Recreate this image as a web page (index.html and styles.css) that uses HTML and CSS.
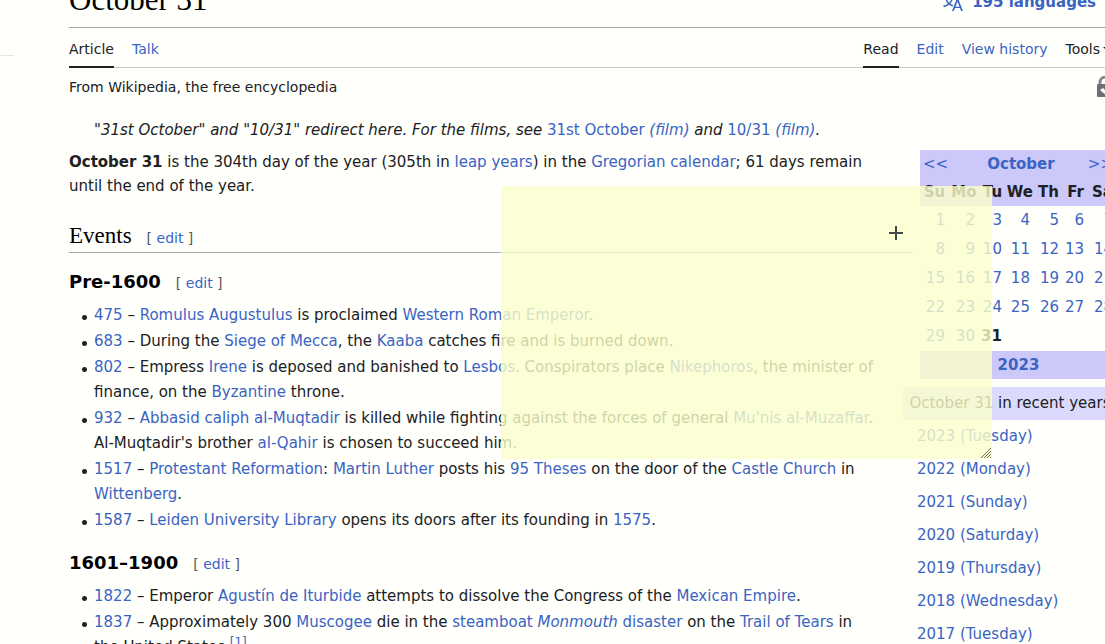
FILE: index.html
```html
<!DOCTYPE html>
<html lang="en">
<head>
<meta charset="utf-8">
<title>October 31 - Wikipedia</title>
<link rel="stylesheet" href="styles.css">
</head>
<body>
<div class="layout">
  <div class="sidebar"></div>
  <div class="page">
    <header class="title-bar">
      <h1 class="title">October 31</h1>
      <button class="languages" type="button">
        <svg class="lang-icon" viewBox="0 0 20 20" fill="currentColor" aria-hidden="true"><path d="M20 18h-1.44a.6.6 0 0 1-.4-.12.8.8 0 0 1-.23-.31L17 15h-5l-1 2.54a.8.8 0 0 1-.22.3.6.6 0 0 1-.4.14H9l4.55-11.47h1.89zm-3.53-4.31L14.89 9.5a12 12 0 0 1-.39-1.24q-.09.37-.19.69l-.19.56-1.58 4.19zm-6.3-1.58a13.4 13.4 0 0 1-2.91-1.41 11.46 11.46 0 0 0 2.81-5.37H12V4H7.31a4 4 0 0 0-.2-.56C6.87 2.79 6.6 2 6.6 2l-1.47.5s.4.89.6 1.5H0v1.33h2.15A11.23 11.23 0 0 0 5 10.7a17.2 17.2 0 0 1-5 2.1q.56.82.87 1.38a23.3 23.3 0 0 0 5.22-2.51 15.6 15.6 0 0 0 3.56 1.77zM3.63 5.33h4.91a8.1 8.1 0 0 1-2.45 4.45 9.1 9.1 0 0 1-2.46-4.45"/></svg>
        <span>195 languages</span>
        <svg class="chevron" viewBox="0 0 12 12" aria-hidden="true"><path d="M2 4l4 4 4-4" fill="none" stroke="currentColor" stroke-width="2"/></svg>
      </button>
    </header>
    <nav class="tabs">
      <a class="tab tab-current" href="#">Article</a>
      <a class="tab" href="#">Talk</a>
      <a class="tab tab-current tab-first-right" href="#">Read</a>
      <a class="tab" href="#">Edit</a>
      <a class="tab" href="#">View history</a>
      <button class="tab tools" type="button">Tools <svg class="tools-arrow" viewBox="0 0 14 12" aria-hidden="true"><path d="M0 4h10L5 9z" fill="currentColor"/></svg></button>
    </nav>
    <div class="site-sub">
      <span>From Wikipedia, the free encyclopedia</span>
      <svg class="lock" viewBox="0 0 21 22" aria-hidden="true"><path d="M4 10V6.500a5.500 5.500 0 0 1 11 0V10" fill="none" stroke="#85858a" stroke-width="3"/><rect x="1" y="8" width="17" height="13" rx="1" fill="#6e6e75"/><path d="M4 14l3-2 3 3 4-3 1 2-5 5z" fill="#fff"/></svg>
    </div>
    <div class="columns">
      <main class="article">
        <p class="hatnote">"31st October" and "10/31" redirect here. For the films, see <a href="#"><span class="upright">31st October</span> (film)</a> and <a href="#"><span class="upright">10/31</span> (film)</a>.</p>
        <p class="lead"><b>October 31</b> is the 304th day of the year (305th in <a href="#">leap years</a>) in the <a href="#">Gregorian calendar</a>; 61 days remain until the end of the year.</p>
        <div class="section-head"><h2 class="section-title">Events</h2><span class="edit">[ <a href="#">edit</a> ]</span></div>
        <div class="sub-head"><h3 class="sub-title">Pre-1600</h3><span class="edit">[ <a href="#">edit</a> ]</span></div>
        <ul class="events">
          <li><a href="#">475</a> – <a href="#">Romulus Augustulus</a> is proclaimed <a href="#">Western Roman Emperor</a>.</li>
          <li><a href="#">683</a> – During the <a href="#">Siege of Mecca</a>, the <a href="#">Kaaba</a> catches fire and is burned down.</li>
          <li><a href="#">802</a> – Empress <a href="#">Irene</a> is deposed and banished to <a href="#">Lesbos</a>. Conspirators place <a href="#">Nikephoros</a>, the minister of finance, on the <a href="#">Byzantine</a> throne.</li>
          <li><a href="#">932</a> – <a href="#">Abbasid caliph</a> <a href="#">al-Muqtadir</a> is killed while fighting against the forces of general <a href="#">Mu'nis al-Muzaffar</a>. Al-Muqtadir's brother <a href="#">al-Qahir</a> is chosen to succeed him.</li>
          <li><a href="#">1517</a> – <a href="#">Protestant Reformation</a>: <a href="#">Martin Luther</a> posts his <a href="#">95 Theses</a> on the door of the <a href="#">Castle Church</a> in <a href="#">Wittenberg</a>.</li>
          <li><a href="#">1587</a> – <a href="#">Leiden University Library</a> opens its doors after its founding in <a href="#">1575</a>.</li>
        </ul>
        <div class="sub-head"><h3 class="sub-title">1601–1900</h3><span class="edit">[ <a href="#">edit</a> ]</span></div>
        <ul class="events">
          <li><a href="#">1822</a> – Emperor <a href="#">Agustín de Iturbide</a> attempts to dissolve the Congress of the <a href="#">Mexican Empire</a>.</li>
          <li><a href="#">1837</a> – Approximately 300 <a href="#">Muscogee</a> die in the <a href="#">steamboat <i>Monmouth</i> disaster</a> on the <a href="#">Trail of Tears</a> in the United States.<sup><a href="#">[1]</a></sup></li>
        </ul>
      </main>
      <aside class="aside">
        <table class="calendar">
          <colgroup><col class="w29"><col class="w30"><col class="w27"><col class="w28"><col class="w29"><col class="w25"><col class="w29"></colgroup>
          <thead>
            <tr class="band"><td class="prev" colspan="2"><a href="#">&lt;&lt;</a></td><th colspan="3"><a href="#">October</a></th><td colspan="2"><a href="#">&gt;&gt;</a></td></tr>
            <tr class="band"><th>Su</th><th>Mo</th><th>Tu</th><th>We</th><th>Th</th><th>Fr</th><th>Sa</th></tr>
          </thead>
          <tbody>
            <tr><td><a href="#">1</a></td><td><a href="#">2</a></td><td><a href="#">3</a></td><td><a href="#">4</a></td><td><a href="#">5</a></td><td><a href="#">6</a></td><td><a href="#">7</a></td></tr>
            <tr><td><a href="#">8</a></td><td><a href="#">9</a></td><td><a href="#">10</a></td><td><a href="#">11</a></td><td><a href="#">12</a></td><td><a href="#">13</a></td><td><a href="#">14</a></td></tr>
            <tr><td><a href="#">15</a></td><td><a href="#">16</a></td><td><a href="#">17</a></td><td><a href="#">18</a></td><td><a href="#">19</a></td><td><a href="#">20</a></td><td><a href="#">21</a></td></tr>
            <tr><td><a href="#">22</a></td><td><a href="#">23</a></td><td><a href="#">24</a></td><td><a href="#">25</a></td><td><a href="#">26</a></td><td><a href="#">27</a></td><td><a href="#">28</a></td></tr>
            <tr><td><a href="#">29</a></td><td><a href="#">30</a></td><td><b>31</b></td><td></td><td></td><td></td><td></td></tr>
          </tbody>
          <tfoot><tr class="band"><th colspan="7"><a href="#">2023</a></th></tr></tfoot>
        </table>
        <section class="recent">
          <div class="recent-title">October 31 in recent years</div>
          <ul class="recent-list">
            <li><a href="#">2023 (Tuesday)</a></li>
            <li><a href="#">2022 (Monday)</a></li>
            <li><a href="#">2021 (Sunday)</a></li>
            <li><a href="#">2020 (Saturday)</a></li>
            <li><a href="#">2019 (Thursday)</a></li>
            <li><a href="#">2018 (Wednesday)</a></li>
            <li><a href="#">2017 (Tuesday)</a></li>
          </ul>
        </section>
      </aside>
    </div>
  </div>
</div>
<div class="note">
  <textarea class="note-text" aria-label="Note"></textarea>
  <svg class="grip" viewBox="0 0 12 12" aria-hidden="true"><path d="M1 11L11 1M4 11l7-7M7 11l4-4M10 11l1-1" fill="none" stroke="#6c6e58" stroke-width="1"/></svg>
</div>
<svg class="pointer" viewBox="0 0 16 16" aria-hidden="true"><path d="M8 1v14M1 8h14" stroke="#444a48" stroke-width="2"/></svg>
</body>
</html>
```
FILE: styles.css
```css
* { box-sizing: border-box; }
html, body { height: 100%; }
body {
  margin: 0;
  overflow: hidden;
  position: relative;
  background: #fffffc;
  color: #202122;
  font-family: "DejaVu Sans", sans-serif;
  font-size: 15px;
  line-height: 25px;
}
a { color: #3a64c2; text-decoration: none; }
h1, h2, h3, p, ul { margin: 0; padding: 0; font-weight: normal; }
button { border: 0; padding: 0; background: none; font: inherit; color: inherit; }

.layout { display: flex; margin-right: -12px; }
.sidebar { flex: 0 0 14px; margin: 55px 55px 0 0; border-top: 1px solid #e4e6ea; }
.page { flex: 1; min-width: 0; margin-top: -20px; }

.title-bar {
  display: flex;
  justify-content: space-between;
  align-items: flex-end;
  padding-bottom: 7px;
  border-bottom: 1px solid #a2a9b1;
}
.title { font: 31px/40px "Liberation Serif", serif; color: #000; }
.languages {
  display: flex;
  align-items: center;
  gap: 9px;
  padding-bottom: 5px;
  color: #3a64c2;
  font-weight: bold;
}
.lang-icon { width: 20px; height: 20px; }
.chevron { width: 12px; height: 12px; }

.tabs {
  display: flex;
  gap: 18px;
  border-bottom: 1px solid #c8ccd1;
  font-size: 14px;
  line-height: 22px;
}
.tab { padding: 10px 0 6px; margin-bottom: -1px; border-bottom: 2px solid transparent; }
.tab-current { color: #202122; border-color: #202122; }
.tab-first-right { margin-left: auto; }
.tools { display: flex; align-items: center; gap: 3px; }
.tools-arrow { width: 14px; height: 12px; }

.site-sub { display: flex; justify-content: space-between; font-size: 14px; line-height: 22px; padding-top: 8px; }
.lock { width: 21px; height: 22px; }

.columns { display: flex; }
.article { flex: 1; min-width: 0; padding-top: 20px; }
.hatnote { padding-left: 25px; font-style: italic; }
.upright { font-style: normal; }
.lead { padding: 7px 36px 0 0; line-height: 24px; }
.section-head {
  display: flex;
  align-items: baseline;
  gap: 15px;
  margin-top: 22px;
  border-bottom: 1px solid #a2a9b1;
}
.section-title { font: 23px/32px "Liberation Serif", serif; color: #000; }
.sub-head { display: flex; align-items: baseline; gap: 15px; padding: 15px 0 7px; }
.sub-title { font-size: 18px; line-height: 28px; font-weight: bold; color: #000; }
.edit { font-size: 14px; line-height: 24px; color: #54595d; }
.events { padding: 0 36px 0 8px; list-style: none; }
.events li {
  margin-bottom: 1px;
  padding-left: 17px;
  background: radial-gradient(circle, #202122 2px, transparent 3px) 4px 11px / 7px 7px no-repeat;
}
sup { font-size: 12px; line-height: 1; }

.aside { flex: 0 0 204px; padding-top: 52px; }
.calendar { width: 197px; margin-left: 7px; table-layout: fixed; border-collapse: collapse; }
.w25 { width: 25px; }
.w27 { width: 27px; }
.w28 { width: 28px; }
.w29 { width: 29px; }
.w30 { width: 30px; }
.calendar th { padding: 0; text-align: center; line-height: 28px; }
.calendar td { padding: 0 4px 0 0; text-align: right; line-height: 29px; }
.calendar .band td { line-height: 28px; }
.calendar .prev { padding-left: 3px; text-align: left; }
.band { background: #ccc8fa; }
.recent { margin: 8px 0 0 -10px; }
.recent-title { background: #dcdafc; text-align: center; line-height: 33px; white-space: nowrap; }
.recent-list { list-style: none; padding-left: 14px; line-height: 33px; }

.note { position: absolute; left: 501px; top: 186px; width: 491px; height: 273px; }
.note-text {
  display: block;
  width: 100%;
  height: 100%;
  padding: 8px;
  border: 0;
  resize: none;
  background: rgb(251 255 202 / 80%);
  font: inherit;
}
.grip { position: absolute; right: 0; bottom: 0; width: 12px; height: 12px; }
.pointer { position: absolute; left: 888px; top: 225px; width: 16px; height: 16px; }
```
